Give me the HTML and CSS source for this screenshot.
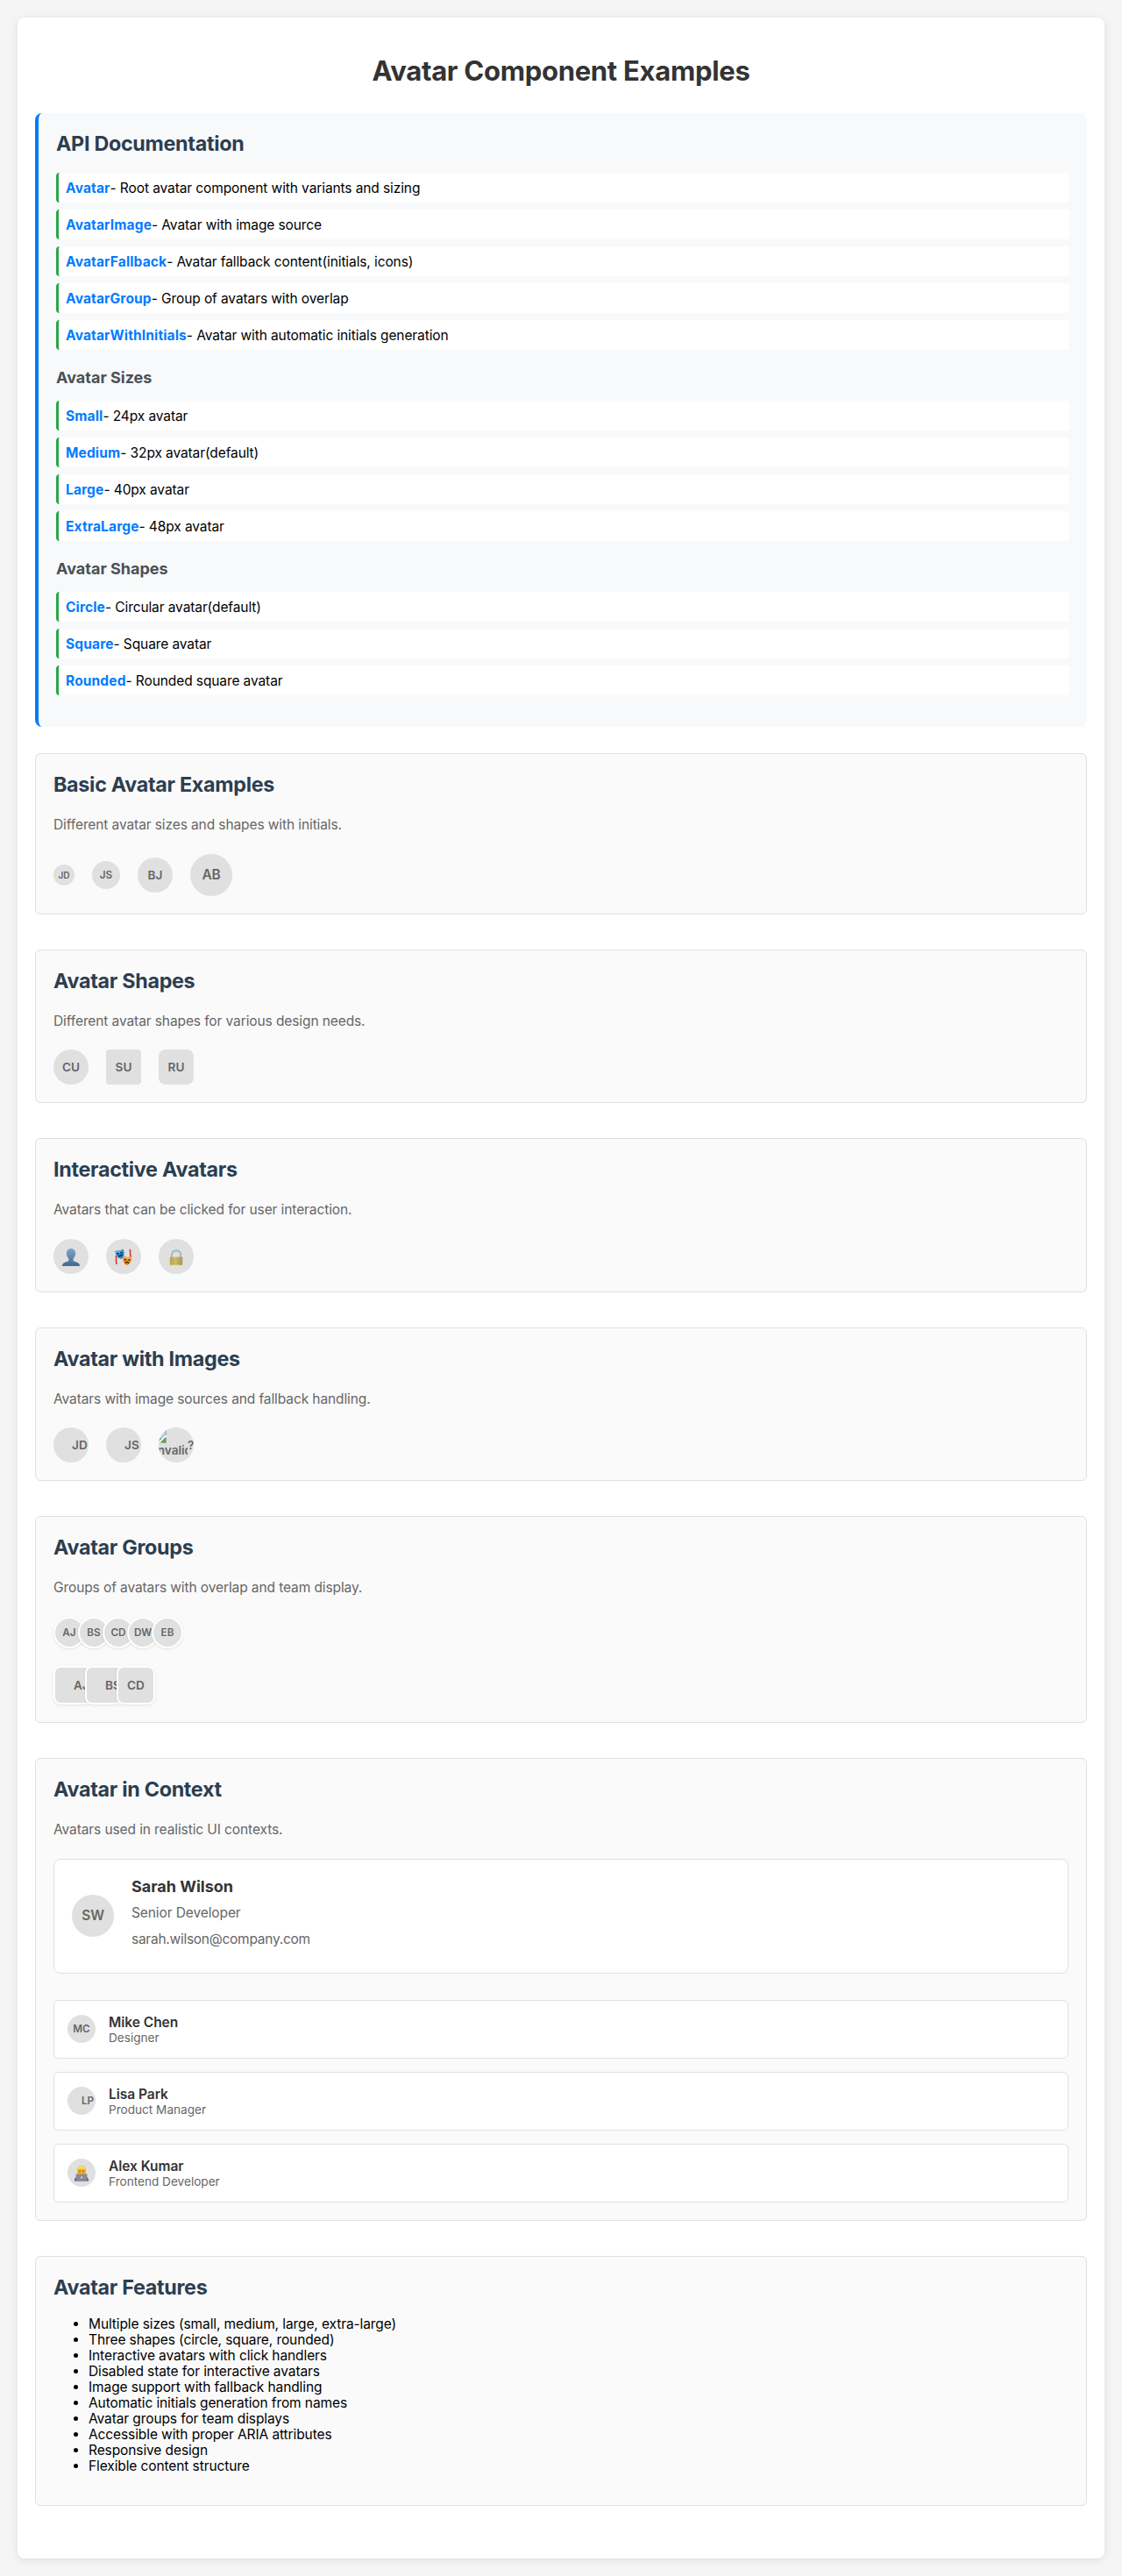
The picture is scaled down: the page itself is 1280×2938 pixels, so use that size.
FILE: index.html
```html
<!DOCTYPE html>
<html lang="en">
<head>
<meta charset="utf-8">
<title>Avatar Component Examples</title>
<link rel="stylesheet" href="styles.css">
</head>
<body>
<main class="container">
  <h1>Avatar Component Examples</h1>

  <section class="api">
    <h2>API Documentation</h2>
    <ul class="api-list">
      <li><strong>Avatar</strong>- Root avatar component with variants and sizing</li>
      <li><strong>AvatarImage</strong>- Avatar with image source</li>
      <li><strong>AvatarFallback</strong>- Avatar fallback content(initials, icons)</li>
      <li><strong>AvatarGroup</strong>- Group of avatars with overlap</li>
      <li><strong>AvatarWithInitials</strong>- Avatar with automatic initials generation</li>
    </ul>
    <h3>Avatar Sizes</h3>
    <ul class="api-list">
      <li><strong>Small</strong>- 24px avatar</li>
      <li><strong>Medium</strong>- 32px avatar(default)</li>
      <li><strong>Large</strong>- 40px avatar</li>
      <li><strong>ExtraLarge</strong>- 48px avatar</li>
    </ul>
    <h3>Avatar Shapes</h3>
    <ul class="api-list">
      <li><strong>Circle</strong>- Circular avatar(default)</li>
      <li><strong>Square</strong>- Square avatar</li>
      <li><strong>Rounded</strong>- Rounded square avatar</li>
    </ul>
  </section>

  <section class="example">
    <h2>Basic Avatar Examples</h2>
    <p>Different avatar sizes and shapes with initials.</p>
    <div class="row">
      <span class="avatar small">JD</span>
      <span class="avatar medium">JS</span>
      <span class="avatar large">BJ</span>
      <span class="avatar xlarge">AB</span>
    </div>
  </section>

  <section class="example">
    <h2>Avatar Shapes</h2>
    <p>Different avatar shapes for various design needs.</p>
    <div class="row">
      <span class="avatar large">CU</span>
      <span class="avatar large square">SU</span>
      <span class="avatar large rounded">RU</span>
    </div>
  </section>

  <section class="example">
    <h2>Interactive Avatars</h2>
    <p>Avatars that can be clicked for user interaction.</p>
    <div class="row">
      <span class="avatar large">
        <svg class="glyph" width="20" height="20" viewBox="0 0 20 20">
          <defs><linearGradient id="bust" x1="0" y1="0" x2="0" y2="1"><stop offset="0" stop-color="#7fa6c9"/><stop offset="1" stop-color="#42688f"/></linearGradient></defs>
          <path fill="url(#bust)" d="M10 0c3.2 0 5.1 2.300 5.100 5.500 0 2.300-1 4.700-2.500 6v1.700c0 1 .8 1.300 2.300 1.800 3 .9 5.100 1.800 5.100 5H0c0-3.200 2.100-4.100 5.100-5 1.500-.5 2.300-.8 2.300-1.800v-1.700C5.900 10.200 4.900 7.800 4.900 5.500 4.900 2.300 6.800 0 10 0z"/>
        </svg>
      </span>
      <span class="avatar large">
        <svg class="glyph" width="20" height="20" viewBox="0 0 20 20">
          <path fill="none" stroke="#d12d25" stroke-width="1.500" d="M1.200 8c1 2.500.3 4 .2 5.500s.8 2.500.3 4.500M17 1c1.300 2 .3 3.500.6 5.500s1 3 .3 5"/>
          <path fill="#2585cc" d="M.3 2.600c3 .6 6-.2 9.200-2 1.600 3.700 2 8.900-1.800 11.200C3.600 11.800.6 7.400.3 2.600z"/>
          <path fill="#5ab8ee" d="M1 3.300c2.800.4 5.300-.3 8-1.700l.4 2.200c-2.600 1.500-5.200 2-7.900 1.700z"/>
          <path fill="none" stroke="#10263d" stroke-width="1.400" d="M2.300 6.200l2.200-1M6.300 4.900l2.200-1M4 8.500c2 .5 3.300-.2 4.700-1.700"/>
          <path fill="#e38e20" d="M9.700 8.200c3.300 1.700 6 2 9.400.9.100 4.500-1.400 9-5.500 10-3.900-1.200-5.100-6.500-3.900-10.900z"/>
          <path fill="#f6ba4e" d="M10.200 9.200c3 1.300 5.600 1.500 8.300.9l-.3 2c-2.900.4-5.400.1-8.100-.9z"/>
          <path fill="none" stroke="#4f270a" stroke-width="1.400" d="M11 12l2.200.8M15.400 13l2.200-.3M12 16.700c1.200-1.700 3-1.500 3.900.3"/>
        </svg>
      </span>
      <span class="avatar large">
        <svg class="glyph faded" width="20" height="20" viewBox="0 0 20 20">
          <defs><linearGradient id="brass" x1="0" y1="0" x2="1" y2="0"><stop offset="0" stop-color="#b59f35"/><stop offset=".45" stop-color="#d0c05b"/><stop offset="1" stop-color="#a18d2c"/></linearGradient></defs>
          <path fill="none" stroke="#7890a4" stroke-width="1.700" d="M5 10V7C5 4.100 7 2.300 10 2.300s5 1.800 5 4.700V10"/>
          <path fill="none" stroke="#d2dde6" stroke-width=".6" d="M5 10V7C5 4.100 7 2.300 10 2.300s5 1.800 5 4.700V10"/>
          <rect x="2.800" y="9.400" width="14.400" height="9.600" rx=".8" fill="url(#brass)"/>
          <path stroke="#9b8930" stroke-width=".5" d="M3 11.800h14M3 14.200h14M3 16.600h14"/>
        </svg>
      </span>
    </div>
  </section>

  <section class="example">
    <h2>Avatar with Images</h2>
    <p>Avatars with image sources and fallback handling.</p>
    <div class="row">
      <span class="avatar large pictured"><span class="slot"></span>JD</span>
      <span class="avatar large pictured"><span class="slot"></span>JS</span>
      <span class="avatar large pictured"><span class="slot broken">
        <svg width="16" height="16" viewBox="0 0 16 16">
          <path fill="#fff" stroke="#a5a5a5" d="M1.500.5h13v14h-13z"/>
          <path fill="#b9cdf6" d="M2 1h12v6L6 14H2z"/>
          <path fill="#fff" d="M4 6c1-2 3-1 3 0h1v1H3z"/>
          <path fill="#4fae38" d="M2 14l5-6 2 2-4 4H2z"/>
          <path fill="#fff" d="M5 14.500l10-9V8l-7 6.500z"/>
          <path fill="#4fae38" d="M8 14l6-6v6z"/>
        </svg>
        <span class="alt">Invalid<br>Image</span></span>?</span>
    </div>
  </section>

  <section class="example">
    <h2>Avatar Groups</h2>
    <p>Groups of avatars with overlap and team display.</p>
    <div class="stack">
      <div class="group">
        <span class="avatar medium">AJ</span>
        <span class="avatar medium">BS</span>
        <span class="avatar medium">CD</span>
        <span class="avatar medium">DW</span>
        <span class="avatar medium">EB</span>
      </div>
      <div class="group">
        <span class="avatar large rounded pictured"><span class="slot"></span>AJ</span>
        <span class="avatar large rounded pictured"><span class="slot"></span>BS</span>
        <span class="avatar large rounded">CD</span>
      </div>
    </div>
  </section>

  <section class="example">
    <h2>Avatar in Context</h2>
    <p>Avatars used in realistic UI contexts.</p>
    <div class="profile">
      <span class="avatar xlarge">SW</span>
      <div class="profile-text">
        <h3>Sarah Wilson</h3>
        <div class="line">Senior Developer</div>
        <div class="line email">sarah.wilson@company.com</div>
      </div>
    </div>
    <div class="members">
      <div class="member">
        <span class="avatar medium">MC</span>
        <div><div class="name">Mike Chen</div><div class="role">Designer</div></div>
      </div>
      <div class="member">
        <span class="avatar medium pictured"><span class="slot"></span>LP</span>
        <div><div class="name">Lisa Park</div><div class="role">Product Manager</div></div>
      </div>
      <div class="member">
        <span class="avatar medium">
          <svg class="coder" width="16" height="18" viewBox="0 0 16 18">
            <path fill="#3546c4" d="M0 17.600c0-3 1-4.600 3-5.200h10c2 .6 3 2.200 3 5.200z"/>
            <path fill="#f5b51d" d="M3 12V5c0-3 2-4.800 5-4.800S13 2 13 5v7z"/>
            <path fill="#fbdc6b" d="M3.500 3.800C4.500 1.500 6 .5 8 .5s3.500 1 4.500 3.300z"/>
            <path fill="#d68a17" d="M4.500 5h2.800v1H4.500zM8.700 5h2.800v1H8.700z"/>
            <circle cx="6" cy="7" r=".7" fill="#6b3f0a"/><circle cx="10" cy="7" r=".7" fill="#6b3f0a"/>
            <rect x="1.600" y="9.400" width="12.800" height="8.200" rx=".8" fill="#898c92"/>
            <circle cx="8" cy="13.500" r=".9" fill="#e9e9ec"/>
          </svg>
        </span>
        <div><div class="name">Alex Kumar</div><div class="role">Frontend Developer</div></div>
      </div>
    </div>
  </section>

  <section class="example">
    <h2>Avatar Features</h2>
    <ul class="features">
      <li>Multiple sizes (small, medium, large, extra-large)</li>
      <li>Three shapes (circle, square, rounded)</li>
      <li>Interactive avatars with click handlers</li>
      <li>Disabled state for interactive avatars</li>
      <li>Image support with fallback handling</li>
      <li>Automatic initials generation from names</li>
      <li>Avatar groups for team displays</li>
      <li>Accessible with proper ARIA attributes</li>
      <li>Responsive design</li>
      <li>Flexible content structure</li>
    </ul>
  </section>
</main>
</body>
</html>
```
FILE: styles.css
```css
* { box-sizing: border-box; }

body {
  margin: 0;
  padding: 20px;
  background: #f5f5f5;
  color: #000;
  font: 15.5px/18px Inter, sans-serif;
  letter-spacing: -0.1px;
}

.container {
  height: 2898px;
  padding: 20px;
  background: #fff;
  border-radius: 8px;
  box-shadow: 0 2px 10px rgba(0, 0, 0, 0.1);
}

h1, h2, h3, p, ul { margin: 0; }

h1 {
  padding: 22px 0 29px;
  color: #333;
  font-size: 31px;
  line-height: 38px;
  letter-spacing: -0.28px;
  text-align: center;
}

h2 {
  margin-bottom: 19px;
  padding-top: 1px;
  color: #2c3e50;
  font-size: 23.3px;
  line-height: 28px;
  letter-spacing: -0.29px;
}

h3 {
  font-size: 18px;
  line-height: 22px;
  letter-spacing: 0;
}

/* API reference */
.api {
  height: 700px;
  margin-bottom: 30px;
  padding: 20px;
  background: #f8f9fa;
  border-left: 4px solid #007bff;
  border-radius: 8px;
}

.api h3 {
  margin: 21px 0 15px;
  color: #495057;
}

.api-list {
  display: flex;
  flex-direction: column;
  gap: 8px;
  padding: 0;
  list-style: none;
}

.api-list li {
  padding: 9px 8px 7px;
  background: #fff;
  border-left: 3px solid #28a745;
  border-radius: 4px;
}

.api-list strong {
  color: #007bff;
  letter-spacing: 0.14px;
}

/* Example cards */
.example {
  margin-bottom: 40px;
  padding: 20px;
  background: #fafafa;
  border: 1px solid #e0e0e0;
  border-radius: 6px;
}

.example p {
  margin-bottom: 20px;
  color: #666;
  line-height: 25.6px;
}

.row {
  display: flex;
  align-items: center;
  gap: 20px;
}

/* Avatars */
.avatar {
  display: inline-flex;
  flex: none;
  align-items: center;
  justify-content: center;
  overflow: hidden;
  background: #e0e0e0;
  border-radius: 50%;
  color: #666;
  font-weight: 600;
  letter-spacing: 0;
  white-space: nowrap;
}

.small { width: 24px; height: 24px; font-size: 10px; }
.medium { width: 32px; height: 32px; font-size: 11.7px; }
.large { width: 40px; height: 40px; font-size: 13.6px; }
.xlarge { width: 48px; height: 48px; font-size: 15.5px; letter-spacing: -0.2px; }
.square { border-radius: 4px; }
.rounded { border-radius: 8px; }
.glyph { margin-top: 2px; }
.faded { opacity: 0.85; }
.coder { margin-top: 2px; }

.pictured { justify-content: flex-start; }
.slot { flex: none; width: 21px; height: 100%; }
.medium .slot { width: 16px; }

.broken {
  display: flex;
  flex-direction: column;
  width: 33px;
  overflow: hidden;
  padding-top: 3px;
}

.broken svg { flex: none; margin-left: -6px; }

.alt {
  align-self: center;
  margin-top: -1px;
  line-height: 17px;
  text-align: center;
}

.stack {
  display: flex;
  flex-direction: column;
  gap: 20px;
}

.group { display: flex; }

.group .avatar {
  box-sizing: content-box;
  border: 2px solid #fff;
  box-shadow: 0 1px 3px rgba(0, 0, 0, 0.1);
}

.group .avatar + .avatar { margin-left: -8px; }

/* Profile and team list */
.profile {
  display: flex;
  align-items: center;
  gap: 20px;
  margin-bottom: 30px;
  padding: 20px;
  background: #fff;
  border: 1px solid #e0e0e0;
  border-radius: 8px;
}

.profile h3 {
  margin-bottom: 6px;
  color: #333;
  line-height: 22.8px;
}

.line {
  margin-bottom: 4.5px;
  color: #666;
  line-height: 25.6px;
}

.email { letter-spacing: -0.26px; }

.members {
  display: flex;
  flex-direction: column;
  gap: 15px;
}

.member {
  display: flex;
  align-items: center;
  gap: 15px;
  padding: 15px;
  background: #fff;
  border: 1px solid #e0e0e0;
  border-radius: 6px;
}

.name {
  padding-top: 1px;
  color: #333;
  font-weight: 600;
  letter-spacing: -0.03px;
}

.role {
  color: #666;
  font-size: 13.6px;
  line-height: 16px;
  letter-spacing: 0;
}

.features {
  padding: 0 0 15px 40px;
}
```
